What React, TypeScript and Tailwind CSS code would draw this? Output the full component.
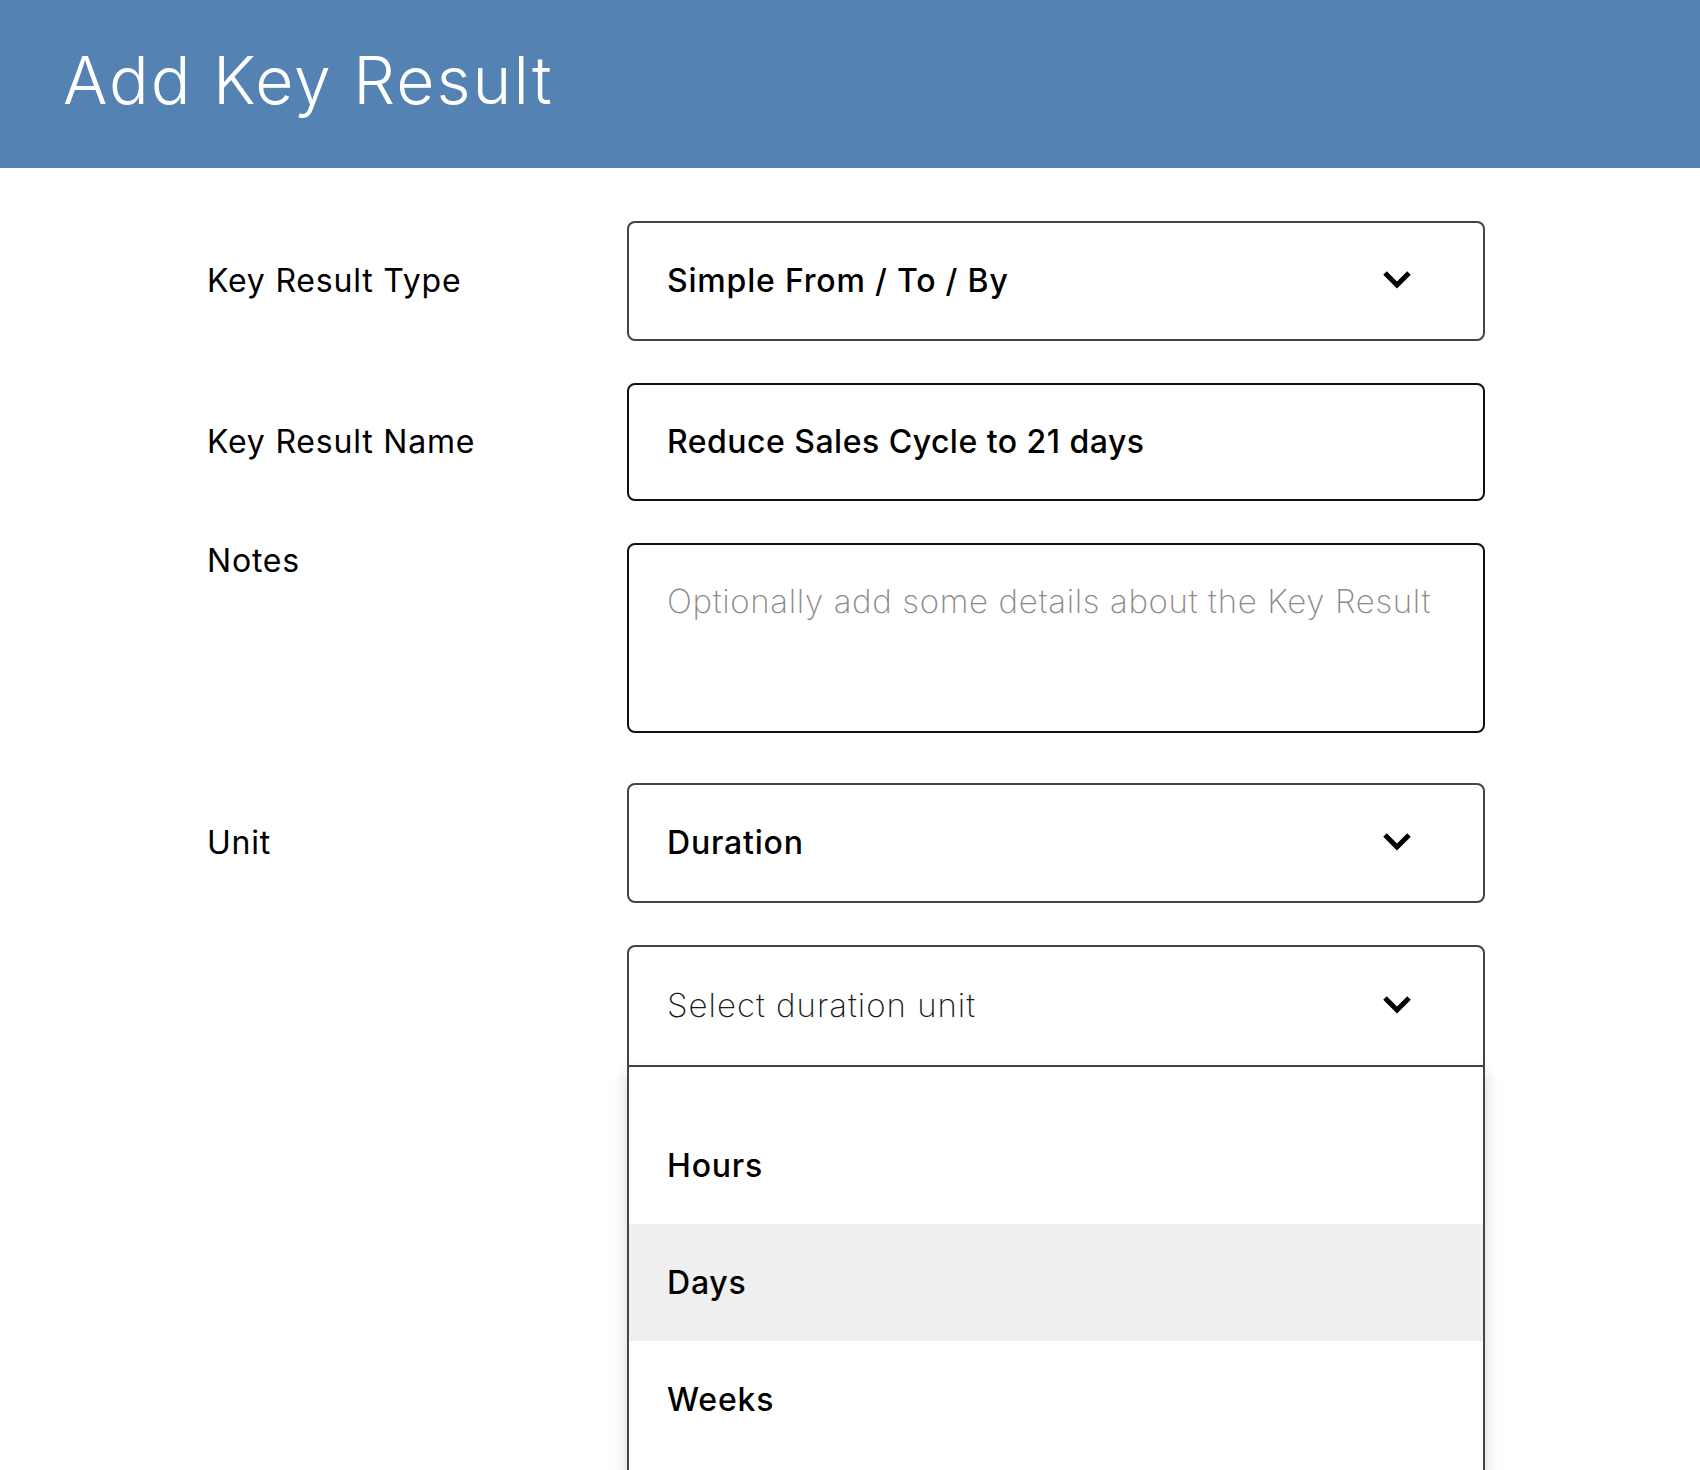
import React from 'react';

const Chevron: React.FC = () => (
    <svg width="30" height="20" viewBox="0 0 30 20" className="shrink-0 -mt-[4px]">
        <path d="M3 4 L15 16 L27 4" fill="none" stroke="#000" strokeWidth="5" strokeLinejoin="miter" />
    </svg>
);

const Row: React.FC<{ label: string; top?: boolean; className?: string; children: React.ReactNode }> = ({
    label,
    top,
    className = '',
    children,
}) => (
    <div className={`flex ${top ? 'items-start' : 'items-center'} ${className}`}>
        <div className="w-[420px] text-[32px] leading-[36px] tracking-[0.025em] text-black">{label}</div>
        {children}
    </div>
);

const SelectBox: React.FC<{ value: string }> = ({ value }) => (
    <div className="w-[858px] h-[120px] rounded-[8px] border-2 border-[#444] flex items-center justify-between pl-[38px] pr-[71px]">
        <span className="text-[32px] font-medium tracking-[0.025em] text-black">{value}</span>
        <Chevron />
    </div>
);

const units = ['Hours', 'Days', 'Weeks'];

export default function App() {
    return (
        <div className="h-[1470px] overflow-hidden bg-white font-['Inter','Noto_Sans',sans-serif]">
            <header className="h-[168px] bg-[#5482b2] flex items-center pl-[63px]">
                <h1 className="text-[66px] font-light leading-none tracking-[0.03em] text-white pb-[8px]">Add Key Result</h1>
            </header>

            <div className="pl-[207px] pt-[53px]">
                <Row label="Key Result Type">
                    <SelectBox value="Simple From / To / By" />
                </Row>

                <Row label="Key Result Name" className="mt-[42px]">
                    <div className="w-[858px] h-[118px] rounded-[8px] border-2 border-[#111] flex items-center pl-[38px]">
                        <span className="text-[32px] font-medium tracking-[0.015em] text-black">Reduce Sales Cycle to 21 days</span>
                    </div>
                </Row>

                <Row label="Notes" top className="mt-[42px]">
                    <div className="w-[858px] h-[190px] rounded-[8px] border-2 border-[#111] pl-[38px] pt-[38px]">
                        <span className="text-[33px] font-extralight leading-[36px] tracking-[0.02em] text-[#8a8a8a]">
                            Optionally add some details about the Key Result
                        </span>
                    </div>
                </Row>

                <Row label="Unit" className="mt-[50px]">
                    <SelectBox value="Duration" />
                </Row>

                {/* open duration unit select with its option list */}
                <div className="ml-[420px] mt-[42px] w-[858px]">
                    <div className="h-[122px] rounded-t-[8px] border-2 border-[#444] flex items-center justify-between pl-[38px] pr-[71px]">
                        <span className="text-[33px] font-extralight tracking-[0.03em] text-[#1a1a1a]">Select duration unit</span>
                        <Chevron />
                    </div>
                    <ul className="border-x-2 border-[#444] pt-[40px] pb-[60px] shadow-[0_6px_14px_rgba(0,0,0,0.18)]">
                        {units.map(u => (
                            <li
                                key={u}
                                className={`h-[117px] flex items-center pl-[38px] text-[32px] font-medium tracking-[0.025em] text-black ${u === 'Days' ? 'bg-[#efefef]' : ''}`}
                            >
                                {u}
                            </li>
                        ))}
                    </ul>
                </div>
            </div>
        </div>
    );
}
